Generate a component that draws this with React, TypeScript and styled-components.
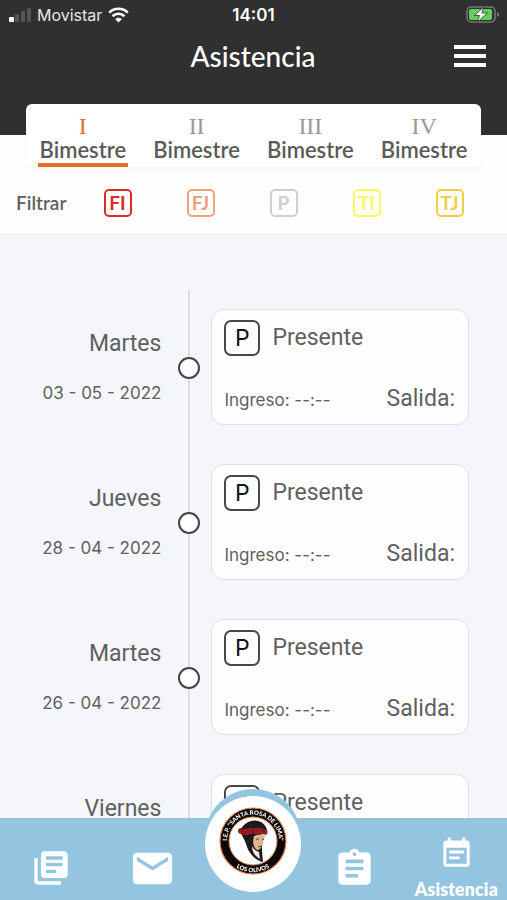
import React, { useState } from "react";
import styled, { createGlobalStyle } from "styled-components";
import { MdAssignment, MdEmail, MdEventNote, MdLibraryBooks } from "react-icons/md";

const rounded = `Lato, "Open Sans", sans-serif`;
const system = `Inter, "Liberation Sans", sans-serif`;
const display = `Roboto, "Liberation Sans", sans-serif`;
const blue = "#93c5e0";

const GlobalStyle = createGlobalStyle`
  * { box-sizing: border-box; }
  body { margin: 0; background: #f5f6fb; }
  button { margin: 0; padding: 0; border: 0; background: none; font: inherit; color: inherit; cursor: pointer; }
  svg { display: block; }
`;

const Screen = styled.div`
  display: flex;
  flex-direction: column;
  height: 100vh;
  font-family: ${system};
  color: #606060;
`;

const Header = styled.header`
  flex: none;
  padding-bottom: 53px;
  background: #303030;
  color: #fff;
`;

const StatusBar = styled.div`
  display: grid;
  grid-template-columns: 1fr auto 1fr;
  align-items: center;
  height: 30px;
  padding: 0 8px;
  font-size: 16px;
`;

const Carrier = styled.div`
  display: flex;
  align-items: center;
  gap: 6px;
  color: #e6e6e6;
`;

const Clock = styled.time`
  font-size: 17px;
  font-weight: 600;
`;

const Battery = styled.div`
  justify-self: end;
`;

const TitleBar = styled.div`
  display: grid;
  grid-template-columns: 1fr auto 1fr;
  align-items: center;
  height: 52px;
  padding: 0 21px 0 20px;
`;

const Title = styled.h1`
  grid-column: 2;
  margin: 0;
  font-family: ${rounded};
  font-size: 28px;
  font-weight: 500;
  line-height: 32px;
`;

const MenuButton = styled.button`
  justify-self: end;
`;

const Panel = styled.section`
  flex: none;
  background: #fefefe;
  border-bottom: 1px solid #e9ebee;
`;

const Tabs = styled.div`
  display: grid;
  grid-template-columns: repeat(4, 1fr);
  margin: -31px 26px 0;
  height: 63px;
  background: #fff;
  border-radius: 6px;
  box-shadow: 0 3px 5px rgba(0, 0, 0, 0.04);
`;

const Tab = styled.button<{ $active: boolean }>`
  display: flex;
  flex-direction: column;
  align-items: center;
  justify-self: center;
  padding: 10px 2px 1px;
  font-family: ${rounded};
  font-size: 22px;
  font-weight: 600;
  line-height: 24px;
  color: #5a5a5a;
  border-bottom: 4px solid ${(p) => (p.$active ? "#e2702b" : "transparent")};
`;

const Numeral = styled.span<{ $active: boolean }>`
  font-family: "Liberation Serif", serif;
  font-size: 24px;
  font-weight: 400;
  color: ${(p) => (p.$active ? "#e2702b" : "#999")};
`;

const Filters = styled.div`
  display: grid;
  grid-template-columns: 60px repeat(5, 1fr);
  align-items: center;
  justify-items: center;
  height: 67px;
  padding: 4px 16px 0;
`;

const FilterLabel = styled.span`
  justify-self: start;
  font-family: ${rounded};
  font-size: 19px;
  font-weight: 600;
`;

const FilterButton = styled.button<{ $color: string }>`
  width: 28px;
  height: 28px;
  border: 2px solid ${(p) => p.$color};
  border-radius: 5px;
  color: ${(p) => p.$color};
  font-family: ${rounded};
  font-size: 19px;
  font-weight: 700;
  line-height: 24px;
`;

const Timeline = styled.main`
  flex: 1;
  min-height: 0;
  overflow-y: auto;
  scrollbar-width: none;
  padding: 55px 38px 0 0;
  background: #f5f6fb;
`;

const Entry = styled.article`
  display: grid;
  grid-template-columns: 13fr 44px 20fr;
`;

const Day = styled.div`
  display: flex;
  flex-direction: column;
  align-items: flex-end;
  gap: 24px;
  padding: 40px 6px 0 0;
  white-space: nowrap;
`;

const Weekday = styled.span`
  font-family: ${display};
  font-size: 23px;
  line-height: 28px;
`;

const DateText = styled.time`
  font-size: 17px;
  line-height: 22px;
`;

const Track = styled.div`
  display: flex;
  justify-content: center;
  align-items: center;
  background: linear-gradient(#dedfe3, #dedfe3) center / 2px 100% no-repeat;
`;

const Dot = styled.span`
  width: 22px;
  height: 22px;
  border: 2px solid #444;
  border-radius: 50%;
  background: #fff;
`;

const Card = styled.div`
  display: flex;
  flex-direction: column;
  justify-content: space-between;
  height: 116px;
  margin: 19px 0 20px;
  padding: 10px 13px 11px 12px;
  border: 1px solid #dedfe2;
  border-radius: 13px;
  background: #fefefe;
`;

const CardRow = styled.div`
  display: flex;
  align-items: center;
  white-space: nowrap;
`;

const CardFooter = styled(CardRow)`
  justify-content: space-between;
  align-items: baseline;
`;

const StatusBadge = styled.span`
  width: 36px;
  height: 36px;
  margin-right: 12px;
  border: 2px solid #484848;
  border-radius: 7px;
  font-size: 23px;
  font-weight: 400;
  line-height: 32px;
  text-align: center;
  color: #111;
`;

const Large = styled.span`
  font-family: ${display};
  font-size: 23px;
  line-height: 28px;
`;

const Small = styled.span`
  font-size: 17px;
  line-height: 22px;
`;

const BottomNav = styled.nav`
  flex: none;
  display: grid;
  grid-template-columns: repeat(5, 1fr);
  justify-items: center;
  height: 82px;
  background: ${blue};
  color: #fff;
`;

const NavButton = styled.button<{ $active?: boolean }>`
  display: flex;
  flex-direction: column;
  align-items: center;
  justify-content: ${(p) => (p.$active ? "flex-start" : "center")};
  padding-top: 18px;
`;

const NavLabel = styled.span`
  font-family: ${rounded};
  font-size: 18px;
  font-weight: 800;
  line-height: 20px;
  margin-top: 8px;
`;

const HomeButton = styled.button`
  width: 96px;
  height: 96px;
  margin-top: -22px;
  display: flex;
  justify-content: center;
  padding-top: 10px;
  border-radius: 50%;
  background: #fff;
  box-shadow: 0 -7px 0 ${blue};
`;

const SignalIcon = () => (
  <svg width="23" height="15" viewBox="0 0 23 15" aria-hidden="true">
    <rect x="1" y="9" width="5" height="5" rx="1" fill="#fff" />
    <rect x="7" y="6" width="4" height="8" rx="1" fill="#555" />
    <rect x="13" y="3" width="4" height="11" rx="1" fill="#555" />
    <rect x="19" y="0" width="4" height="14" rx="1" fill="#555" />
  </svg>
);

const WifiIcon = () => (
  <svg width="21" height="16" viewBox="0 0 21 16" fill="none" stroke="#fff" strokeWidth="2.6" aria-hidden="true">
    <path d="M1.2 5.6a13.2 13.2 0 0 1 18.6 0" />
    <path d="M4.6 9.2a8.4 8.4 0 0 1 11.8 0" />
    <path d="M10.5 15.6 7.2 12.2a4.7 4.7 0 0 1 6.6 0Z" fill="#fff" stroke="none" />
  </svg>
);

const BatteryIcon = () => (
  <svg width="33" height="18" viewBox="0 0 33 18" aria-hidden="true">
    <rect x="1" y="1" width="28" height="15" rx="4" fill="none" stroke="#777" strokeWidth="1.5" />
    <path d="M31 6v5q2-1 2-2.500t-2-2.500Z" fill="#777" />
    <rect x="3" y="3" width="23" height="11" rx="2" fill="#5fce5b" />
    <path d="M17.500 1 8.500 9.500h5L11.500 16l10-9h-5.500Z" fill="#fff" stroke="#303030" strokeWidth="0.8" />
  </svg>
);

const MenuIcon = () => (
  <svg width="32" height="24" viewBox="0 0 32 24" fill="#fff" aria-hidden="true">
    <rect y="1" width="32" height="4" />
    <rect y="10" width="32" height="4" />
    <rect y="19" width="32" height="4" />
  </svg>
);

const Emblem = () => (
  <svg width="70" height="70" viewBox="0 0 70 70" role="img" aria-label="I.E.P. Santa Rosa de Lima, Los Olivos">
    <defs>
      <path id="upper" d="M13.300 49A26 26 0 1 1 56.700 49" />
      <path id="lower" d="M13 57A31 31 0 0 0 57 57" />
    </defs>
    <circle cx="35" cy="35" r="33" fill="#0c0a09" stroke="#e18750" strokeWidth="1.200" />
    <circle cx="35" cy="35" r="24" fill="#fff" stroke="#e18750" strokeWidth="1" />
    <g fill="#fff" fontFamily="Lato, sans-serif" fontWeight="900">
      <text fontSize="6" textAnchor="middle">
        <textPath href="#upper" startOffset="50%">I.E.P. "SANTA ROSA DE LIMA"</textPath>
      </text>
      <text fontSize="6" textAnchor="middle">
        <textPath href="#lower" startOffset="50%">LOS OLIVOS</textPath>
      </text>
    </g>
    <path d="M22 25c3-8 12-12 18-10 5 1 8 5 9 9l-4 5c-2 7-1 15 0 27-6-1-13-7-16-15-1-5-4-9-7-16Z" fill="#1c191b" />
    <path d="M36 30c4-2 8-2 11 0l-2 6v3l-2 1c0 3-2 4-4 4-3-2-5-7-3-14Z" fill="#dfb58d" />
    <path d="M34 40c1 3 4 5 7 6l1 7c-5-3-8-7-8-13Z" fill="#eee9e4" />
    <path d="M43 29c2-2 5-2 7-1l-3 4c-1-2-2-3-4-3Z" fill="#ddd" />
    <path d="M38 34q2-2 3-1M44 34l2-1M40 41l3-1" fill="none" stroke="#55372d" strokeWidth="1" />
    <g fill="#9e1d22">
      <circle cx="23" cy="25" r="3" />
      <circle cx="28" cy="26" r="3.200" />
      <circle cx="33" cy="25" r="3.300" />
      <circle cx="38" cy="25" r="3.200" />
      <circle cx="43" cy="25" r="3.200" />
      <circle cx="47" cy="26" r="2.600" />
    </g>
    <g fill="none" stroke="#5c1114" strokeWidth="0.800">
      <path d="M22 24q2-2 3 0t-2 1M28 27q1-3 3-1M33 25q2-2 3 0t-2 1M38 26q1-3 3-1M43 24q2-2 3 0t-2 1" />
    </g>
  </svg>
);

const terms = ["I", "II", "III", "IV"];

const filters = [
  { code: "FI", color: "#df2b25" },
  { code: "FJ", color: "#f0a07c" },
  { code: "P", color: "#cfcfcf" },
  { code: "TI", color: "#fbfa5c" },
  { code: "TJ", color: "#f0cf45" },
];

const entries = [
  { weekday: "Martes", date: "03 - 05 - 2022" },
  { weekday: "Jueves", date: "28 - 04 - 2022" },
  { weekday: "Martes", date: "26 - 04 - 2022" },
  { weekday: "Viernes", date: "22 - 04 - 2022" },
];

export default function App() {
  const [term, setTerm] = useState("I");

  return (
    <Screen>
      <GlobalStyle />
      <Header>
        <StatusBar>
          <Carrier>
            <SignalIcon />
            <span>Movistar</span>
            <WifiIcon />
          </Carrier>
          <Clock>14:01</Clock>
          <Battery>
            <BatteryIcon />
          </Battery>
        </StatusBar>
        <TitleBar>
          <Title>Asistencia</Title>
          <MenuButton aria-label="Menú">
            <MenuIcon />
          </MenuButton>
        </TitleBar>
      </Header>
      <Panel>
        <Tabs role="tablist">
          {terms.map((t) => (
            <Tab key={t} role="tab" aria-selected={t === term} $active={t === term} onClick={() => setTerm(t)}>
              <Numeral $active={t === term}>{t}</Numeral>
              Bimestre
            </Tab>
          ))}
        </Tabs>
        <Filters>
          <FilterLabel>Filtrar</FilterLabel>
          {filters.map((f) => (
            <FilterButton key={f.code} $color={f.color}>
              {f.code}
            </FilterButton>
          ))}
        </Filters>
      </Panel>
      <Timeline>
        {entries.map((e) => (
          <Entry key={e.date}>
            <Day>
              <Weekday>{e.weekday}</Weekday>
              <DateText>{e.date}</DateText>
            </Day>
            <Track>
              <Dot />
            </Track>
            <Card>
              <CardRow>
                <StatusBadge>P</StatusBadge>
                <Large>Presente</Large>
              </CardRow>
              <CardFooter>
                <Small>Ingreso: --:--</Small>
                <Large>Salida:</Large>
              </CardFooter>
            </Card>
          </Entry>
        ))}
      </Timeline>
      <BottomNav>
        <NavButton aria-label="Cursos">
          <MdLibraryBooks size={40} />
        </NavButton>
        <NavButton aria-label="Mensajes">
          <MdEmail size={47} />
        </NavButton>
        <HomeButton aria-label="Inicio">
          <Emblem />
        </HomeButton>
        <NavButton aria-label="Tareas">
          <MdAssignment size={43} />
        </NavButton>
        <NavButton $active aria-current="page">
          <MdEventNote size={35} />
          <NavLabel>Asistencia</NavLabel>
        </NavButton>
      </BottomNav>
    </Screen>
  );
}
